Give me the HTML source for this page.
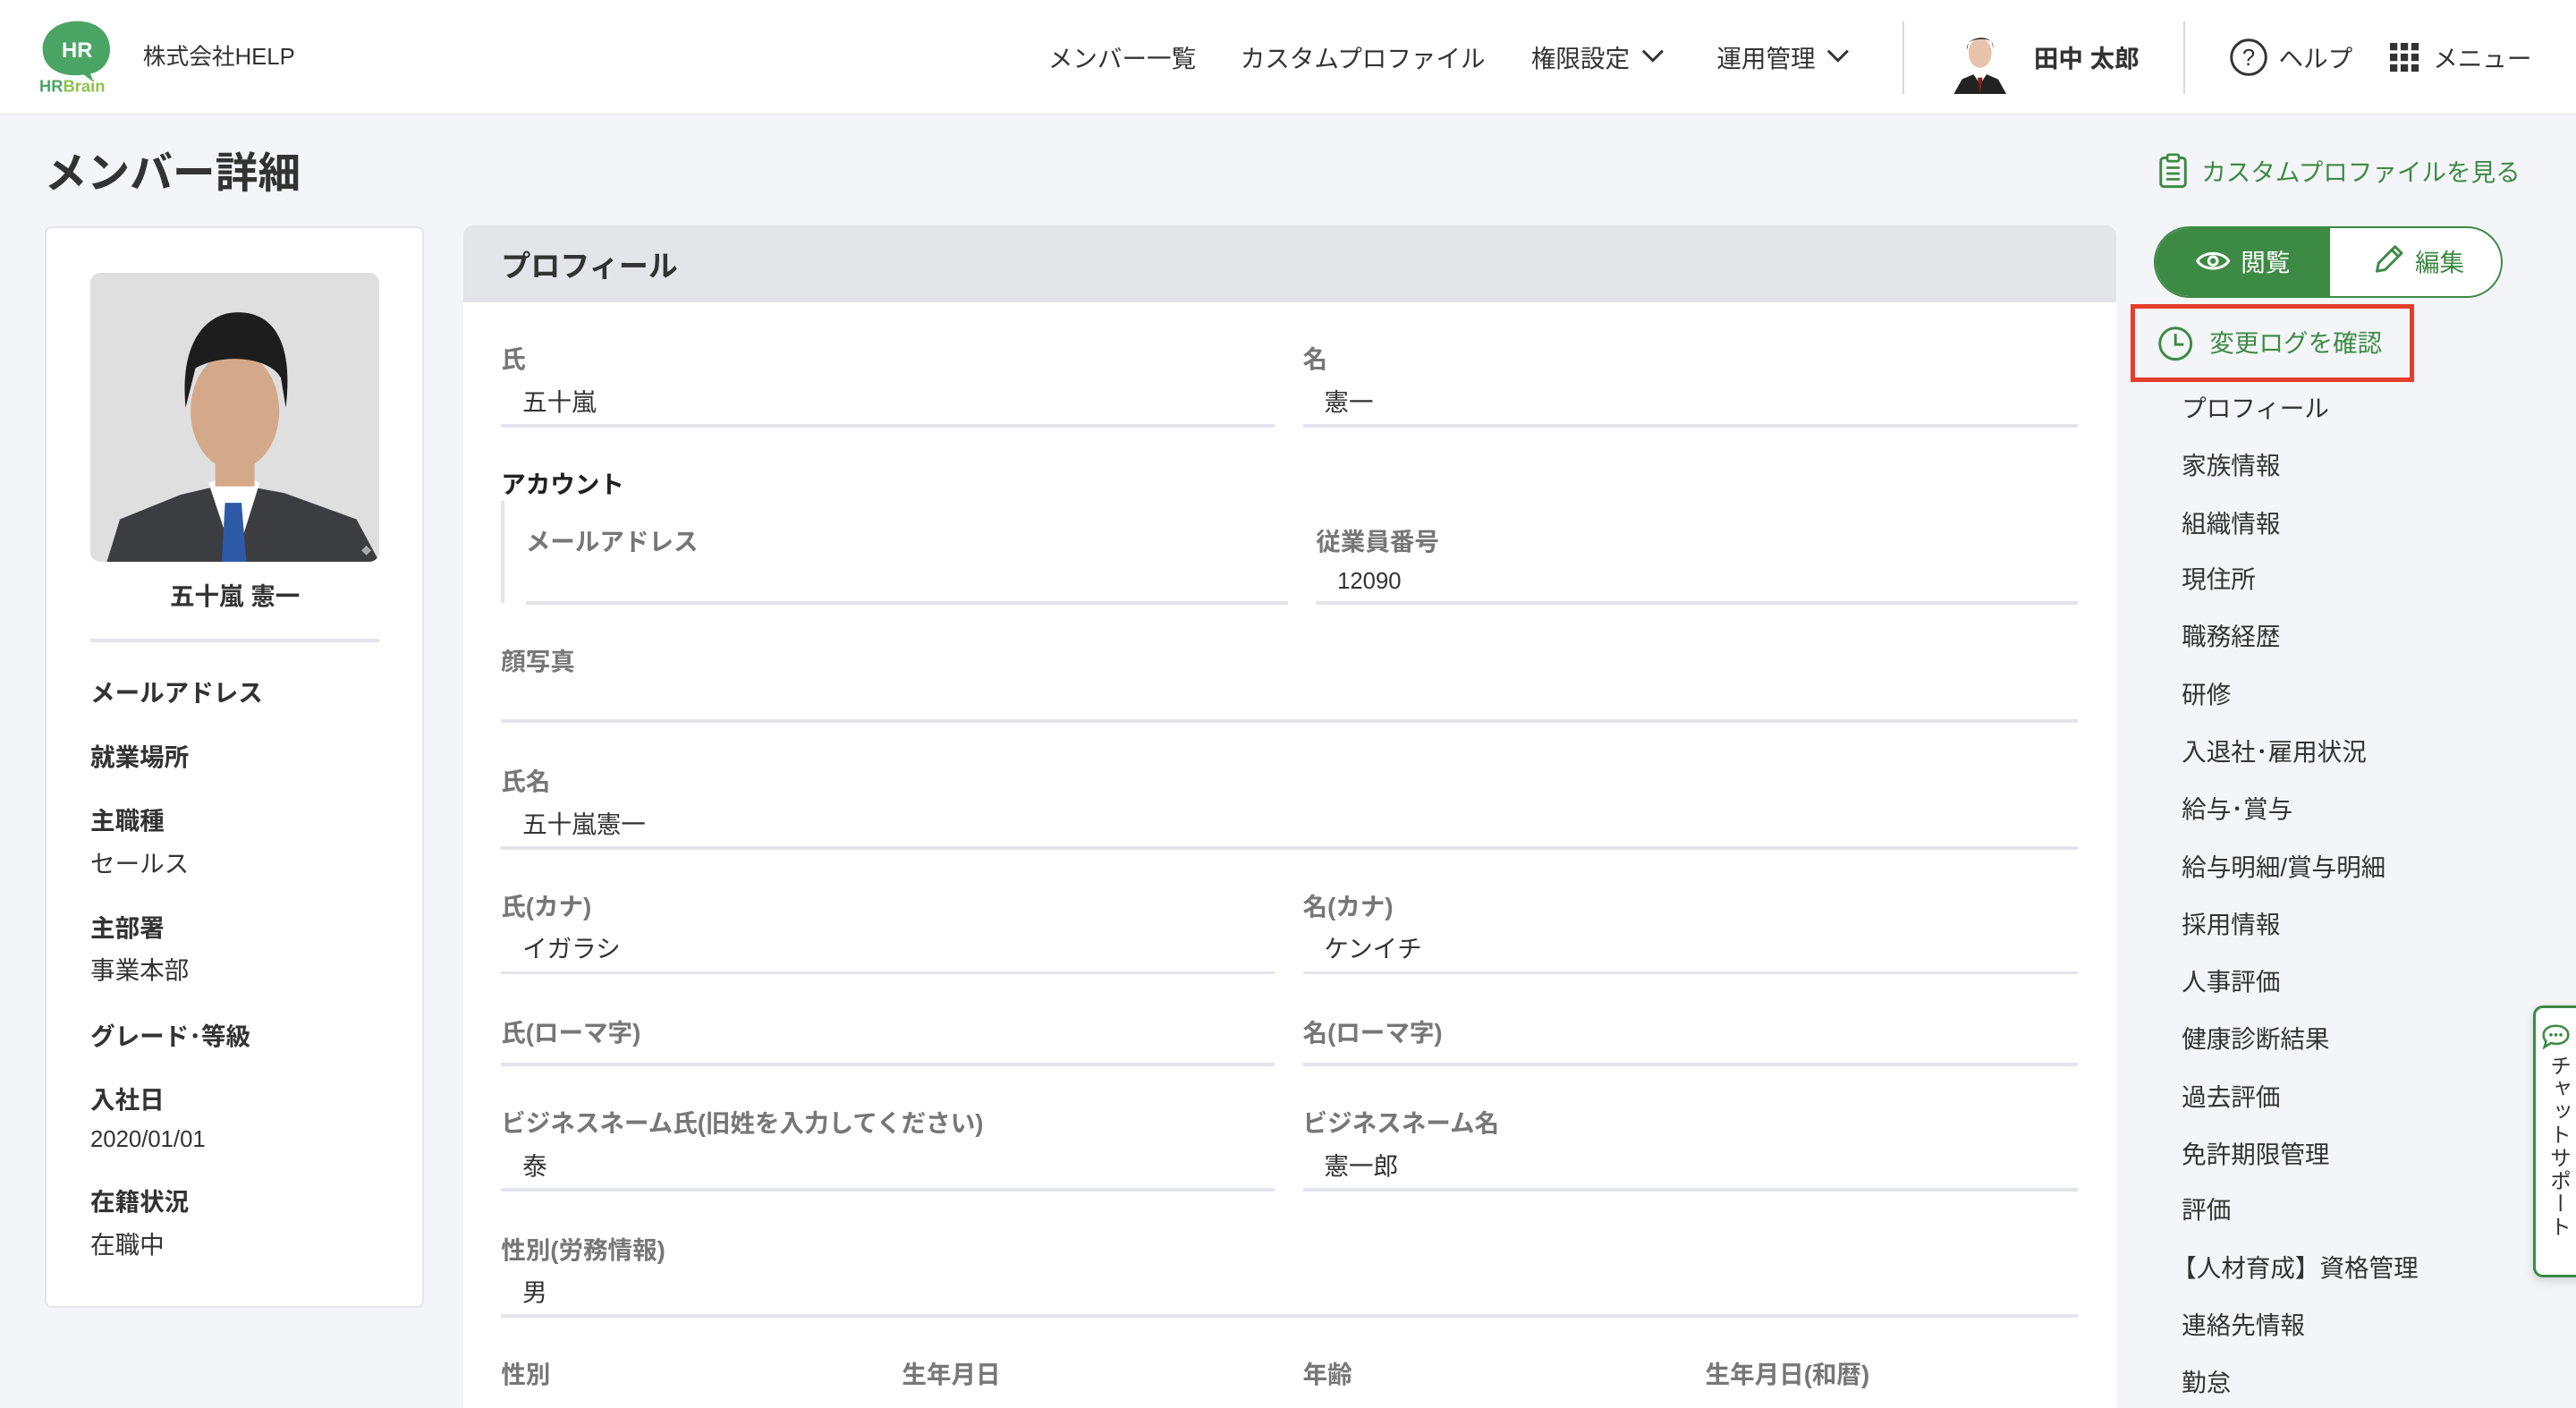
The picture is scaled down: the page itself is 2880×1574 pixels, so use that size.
<!DOCTYPE html>
<html><head><meta charset="utf-8"><style>
html,body{margin:0;padding:0}
body{width:1568px;height:847px;overflow:hidden;zoom:1.83673;background:#f4f5f9;font-family:"Liberation Sans","Noto Sans CJK JP",sans-serif;color:#333;position:relative}
.t{position:absolute;white-space:nowrap;line-height:20px;font-size:15px;transform:translateY(1px)}
.b{font-weight:bold}
.lb{color:#777;font-weight:bold;font-size:15px}
.ln{position:absolute;height:2px;background:#e4e5ea}
.g{color:#3d8a44}
</style></head><body>
<!-- header -->
<div style="position:absolute;left:0;top:0;width:1568px;height:69px;background:#fff;border-bottom:1px solid #e2e3e8"></div>
<svg style="position:absolute;left:24px;top:11px" width="46" height="48" viewBox="0 0 46 48">
<path d="M23 2C35 2 43 9 43 19C43 28 37 33 31 34L33 39L27 34.5C24 35 23 35 22 35C10 35 2 29 2 19C2 9 11 2 23 2Z" fill="#4aa564"/>
<text x="23" y="24" text-anchor="middle" font-family="Liberation Sans" font-weight="bold" font-size="13" fill="#fff">HR</text>
<text x="0" y="45" font-family="Liberation Sans" font-weight="bold" font-size="10" fill="#4aa564">HR<tspan fill="#8cc34a">Brain</tspan></text>
</svg>
<div class="t" style="left:87px;top:24px;font-size:14px">株式会社HELP</div>
<div class="t" style="left:638px;top:25px">メンバー一覧</div>
<div class="t" style="left:755px;top:25px">カスタムプロファイル</div>
<div class="t" style="left:932px;top:25px">権限設定</div>
<svg style="position:absolute;left:999px;top:29px" width="14" height="10"><path d="M1 2L7 8L13 2" fill="none" stroke="#333" stroke-width="1.6"/></svg>
<div class="t" style="left:1045px;top:25px">運用管理</div>
<svg style="position:absolute;left:1112px;top:29px" width="14" height="10"><path d="M1 2L7 8L13 2" fill="none" stroke="#333" stroke-width="1.6"/></svg>
<div style="position:absolute;left:1158px;top:13px;width:1px;height:44px;background:#d8d8d8"></div>
<svg style="position:absolute;left:1185px;top:15px" width="40" height="42" viewBox="0 0 40 42">
<ellipse cx="20" cy="17" rx="7" ry="9" fill="#e6c3aa"/>
<path d="M12 15C11 6 29 5 28 14L27 10C24 8 16 8 13 11Z" fill="#222"/>
<path d="M4 42L9 33L16 30L20 36L24 30L31 33L36 42Z" fill="#222"/>
<path d="M18.5 32L20 42L21.5 32Z" fill="#8b1d24"/>
</svg>
<div class="t b" style="left:1238px;top:25px">田中 太郎</div>
<div style="position:absolute;left:1329px;top:13px;width:1px;height:44px;background:#d8d8d8"></div>
<svg style="position:absolute;left:1357px;top:23px" width="24" height="24" viewBox="0 0 24 24"><circle cx="12" cy="12" r="10.5" fill="none" stroke="#333" stroke-width="1.6"/><text x="12" y="17" text-anchor="middle" font-size="14" font-family="Liberation Sans" fill="#333">?</text></svg>
<div class="t" style="left:1387px;top:25px">ヘルプ</div>
<svg style="position:absolute;left:1455px;top:26px" width="18" height="18"><g fill="#333"><rect x="0" y="0" width="4.5" height="4.5"/><rect x="6.5" y="0" width="4.5" height="4.5"/><rect x="13" y="0" width="4.5" height="4.5"/><rect x="0" y="6.5" width="4.5" height="4.5"/><rect x="6.5" y="6.5" width="4.5" height="4.5"/><rect x="13" y="6.5" width="4.5" height="4.5"/><rect x="0" y="13" width="4.5" height="4.5"/><rect x="6.5" y="13" width="4.5" height="4.5"/><rect x="13" y="13" width="4.5" height="4.5"/></g></svg>
<div class="t" style="left:1481px;top:25px">メニュー</div>

<div class="t b" style="left:27px;top:90px;font-size:26px;line-height:30px">メンバー詳細</div>

<!-- left card -->
<div style="position:absolute;left:27px;top:138px;width:229px;height:656px;background:#fff;border:1.5px solid #e4e5ea;border-radius:4px"></div>
<svg style="position:absolute;left:55px;top:166px;border-radius:6px" width="176" height="176" viewBox="0 0 176 176">
<rect width="176" height="176" fill="#dfdfe0"/>
<path d="M10 176L18 150L55 135L85 128L118 134L162 150L176 176Z" fill="#3c3d40"/>
<path d="M72 128L88 176L103 128L90 120Z" fill="#fff"/>
<path d="M82 140L92 140L95 176L80 176Z" fill="#2d5aa6"/>
<ellipse cx="88" cy="84" rx="27" ry="36" fill="#d4a98a"/>
<rect x="76" y="110" width="24" height="20" fill="#d4a98a"/>
<path d="M58 82C54 40 72 24 90 24C110 24 124 40 119 82L116 64C110 52 82 48 64 58Z" fill="#1d1d1d"/>
<path d="M168 166l3 3-3 3-3-3z" fill="#aaa"/>
</svg>
<div class="t b" style="left:55px;width:176px;text-align:center;top:352px">五十嵐 憲一</div>
<div class="ln" style="left:55px;top:389px;width:176px"></div>
<div class="t b" style="left:55px;top:411px">メールアドレス</div>
<div class="t b" style="left:55px;top:450px">就業場所</div>
<div class="t b" style="left:55px;top:489px">主職種</div>
<div class="t" style="left:55px;top:515px">セールス</div>
<div class="t b" style="left:55px;top:554px">主部署</div>
<div class="t" style="left:55px;top:580px">事業本部</div>
<div class="t b" style="left:55px;top:620px">グレード･等級</div>
<div class="t b" style="left:55px;top:659px">入社日</div>
<div class="t" style="left:55px;top:683px;font-size:14px">2020/01/01</div>
<div class="t b" style="left:55px;top:721px">在籍状況</div>
<div class="t" style="left:55px;top:747px">在職中</div>

<!-- main card -->
<div style="position:absolute;left:282px;top:137px;width:1006px;height:720px;background:#fff;border-radius:6px 6px 0 0;overflow:hidden">
<div style="height:47px;background:#e4e5e9"></div></div>
<div class="t b" style="left:305px;top:151px;font-size:18px;line-height:22px">プロフィール</div>

<div class="t lb" style="left:305px;top:208px">氏</div>
<div class="t" style="left:318px;top:234px">五十嵐</div>
<div class="ln" style="left:305px;top:258px;width:471px"></div>
<div class="t lb" style="left:793px;top:208px">名</div>
<div class="t" style="left:806px;top:234px">憲一</div>
<div class="ln" style="left:793px;top:258px;width:472px"></div>

<div class="t b" style="left:305px;top:284px;color:#222">アカウント</div>
<div style="position:absolute;left:305px;top:305px;width:2px;height:62px;background:#e4e5ea"></div>
<div class="t lb" style="left:320px;top:319px">メールアドレス</div>
<div class="ln" style="left:320px;top:366px;width:464px"></div>
<div class="t lb" style="left:801px;top:319px">従業員番号</div>
<div class="t" style="left:814px;top:343px;font-size:14px">12090</div>
<div class="ln" style="left:801px;top:366px;width:464px"></div>

<div class="t lb" style="left:305px;top:392px">顔写真</div>
<div class="ln" style="left:305px;top:438px;width:960px"></div>

<div class="t lb" style="left:305px;top:465px">氏名</div>
<div class="t" style="left:318px;top:491px">五十嵐憲一</div>
<div class="ln" style="left:305px;top:515px;width:960px"></div>

<div class="t lb" style="left:305px;top:541px">氏(カナ)</div>
<div class="t" style="left:318px;top:567px">イガラシ</div>
<div class="ln" style="left:305px;top:591px;width:471px"></div>
<div class="t lb" style="left:793px;top:541px">名(カナ)</div>
<div class="t" style="left:806px;top:567px">ケンイチ</div>
<div class="ln" style="left:793px;top:591px;width:472px"></div>

<div class="t lb" style="left:305px;top:618px">氏(ローマ字)</div>
<div class="ln" style="left:305px;top:647px;width:471px"></div>
<div class="t lb" style="left:793px;top:618px">名(ローマ字)</div>
<div class="ln" style="left:793px;top:647px;width:472px"></div>

<div class="t lb" style="left:305px;top:673px">ビジネスネーム氏(旧姓を入力してください)</div>
<div class="t" style="left:318px;top:699px">泰</div>
<div class="ln" style="left:305px;top:723px;width:471px"></div>
<div class="t lb" style="left:793px;top:673px">ビジネスネーム名</div>
<div class="t" style="left:806px;top:699px">憲一郎</div>
<div class="ln" style="left:793px;top:723px;width:472px"></div>

<div class="t lb" style="left:305px;top:750px">性別(労務情報)</div>
<div class="t" style="left:318px;top:776px">男</div>
<div class="ln" style="left:305px;top:800px;width:960px"></div>

<div class="t lb" style="left:305px;top:826px">性別</div>
<div class="t lb" style="left:549px;top:826px">生年月日</div>
<div class="t lb" style="left:793px;top:826px">年齢</div>
<div class="t lb" style="left:1038px;top:826px">生年月日(和暦)</div>

<!-- right side -->
<svg style="position:absolute;left:1314px;top:93px" width="18" height="22" viewBox="0 0 18 22"><rect x="1.5" y="3" width="15" height="17.5" rx="2" fill="none" stroke="#3d8a44" stroke-width="1.6"/><rect x="5.5" y="1" width="7" height="4" rx="1" fill="#fff" stroke="#3d8a44" stroke-width="1.5"/><path d="M5 9h8M5 12.5h8M5 16h8" stroke="#3d8a44" stroke-width="1.5"/></svg>
<div class="t g" style="left:1340px;top:94px">カスタムプロファイルを見る</div>

<div style="position:absolute;left:1311px;top:138px;width:210px;height:41px;border:1.5px solid #3d8a44;border-radius:22px;background:#fff;overflow:hidden"><div style="width:106px;height:41px;background:#3d8a44"></div></div>
<svg style="position:absolute;left:1336px;top:151px" width="22" height="16" viewBox="0 0 22 16"><path d="M1.5 8C5 2 17 2 20.5 8C17 14 5 14 1.5 8Z" fill="none" stroke="#fff" stroke-width="1.7"/><circle cx="11" cy="8" r="2.6" fill="none" stroke="#fff" stroke-width="1.7"/></svg>
<div class="t" style="left:1364px;top:149px;color:#fff">閲覧</div>
<svg style="position:absolute;left:1444px;top:148px" width="20" height="20" viewBox="0 0 20 20"><path d="M3 17L4 12L14 2L18 6L8 16Z M12 4L16 8" fill="none" stroke="#3d8a44" stroke-width="1.6" stroke-linejoin="round"/></svg>
<div class="t g" style="left:1470px;top:149px">編集</div>

<div style="position:absolute;left:1297px;top:185px;width:167px;height:42px;border:3px solid #e53d2a"></div>
<svg style="position:absolute;left:1313px;top:198px" width="22" height="22" viewBox="0 0 22 22"><circle cx="11" cy="11" r="9.5" fill="none" stroke="#3d8a44" stroke-width="1.6"/><path d="M11 5V11.5H16" fill="none" stroke="#3d8a44" stroke-width="1.6"/></svg>
<div class="t g" style="left:1345px;top:198px">変更ログを確認</div>

<div class="t" style="left:1328px;top:238px">プロフィール</div>
<div class="t" style="left:1328px;top:273px">家族情報</div>
<div class="t" style="left:1328px;top:308px">組織情報</div>
<div class="t" style="left:1328px;top:342px">現住所</div>
<div class="t" style="left:1328px;top:377px">職務経歴</div>
<div class="t" style="left:1328px;top:412px">研修</div>
<div class="t" style="left:1328px;top:447px">入退社･雇用状況</div>
<div class="t" style="left:1328px;top:482px">給与･賞与</div>
<div class="t" style="left:1328px;top:517px">給与明細/賞与明細</div>
<div class="t" style="left:1328px;top:552px">採用情報</div>
<div class="t" style="left:1328px;top:587px">人事評価</div>
<div class="t" style="left:1328px;top:622px">健康診断結果</div>
<div class="t" style="left:1328px;top:657px">過去評価</div>
<div class="t" style="left:1328px;top:692px">免許期限管理</div>
<div class="t" style="left:1328px;top:726px">評価</div>
<div class="t" style="left:1322px;top:761px">【人材育成】資格管理</div>
<div class="t" style="left:1328px;top:796px">連絡先情報</div>
<div class="t" style="left:1328px;top:831px">勤怠</div>

<!-- chat tab -->
<div style="position:absolute;left:1542px;top:612px;width:30px;height:162px;background:#fff;border:2px solid #3d8a44;border-radius:6px 0 0 6px;box-shadow:0 2px 6px rgba(0,0,0,.15)"></div>
<svg style="position:absolute;left:1547px;top:623px" width="18" height="16" viewBox="0 0 18 16"><path d="M9 1.5C13.5 1.5 16.5 3.8 16.5 7C16.5 10.2 13.5 12.5 9 12.5C8 12.5 7 12.3 6 12L2 14.5L3 11C2 10 1.5 8.6 1.5 7C1.5 3.8 4.5 1.5 9 1.5Z" fill="none" stroke="#3d8a44" stroke-width="1.4"/><circle cx="6" cy="7" r="1" fill="#3d8a44"/><circle cx="9" cy="7" r="1" fill="#3d8a44"/><circle cx="12" cy="7" r="1" fill="#3d8a44"/></svg>
<div style="position:absolute;left:1549px;top:642px;writing-mode:vertical-rl;font-size:13px;line-height:16px;color:#333;letter-spacing:1px">チャットサポート</div>
</body></html>
